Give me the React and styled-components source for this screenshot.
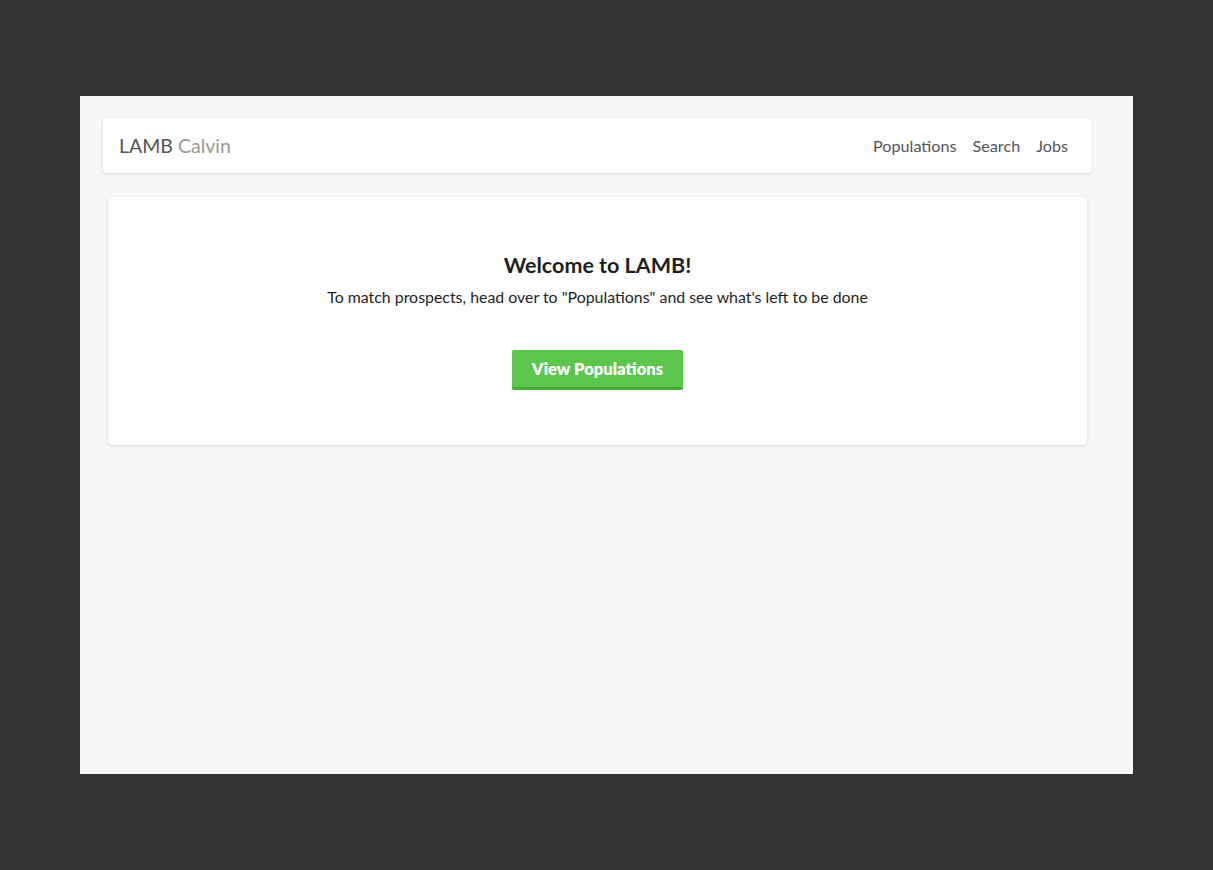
import React from "react";
import styled, { createGlobalStyle } from "styled-components";

const Global = createGlobalStyle`
  html, body { margin: 0; padding: 0; background: #323232; }
  body { font-family: "Lato", "Open Sans", sans-serif; }
`;

const Frame = styled.div`
  margin: 96px 80px;
  width: 1053px;
  height: 678px;
  box-sizing: border-box;
  background: #f7f8fa;
  padding: 22px 41px 0 23px;
`;

const Navbar = styled.nav`
  height: 55px;
  box-sizing: border-box;
  background: #fff;
  border-radius: 4px;
  box-shadow: 0 1px 3px rgba(0, 0, 0, 0.14);
  display: flex;
  align-items: center;
  justify-content: space-between;
  padding: 0 24px 1px 16px;
`;

const Brand = styled.div`
  font-size: 19.5px;
  color: #555;
`;

const Sub = styled.span`
  color: #999;
`;

const Links = styled.div`
  display: flex;
  gap: 16px;
`;

const NavLink = styled.a`
  font-size: 16.2px;
  color: #555;
  text-decoration: none;
`;

const Card = styled.section`
  margin: 24px 5px 0;
  height: 248px;
  box-sizing: border-box;
  background: #fff;
  border-radius: 4px;
  box-shadow: 0 1px 3px rgba(0, 0, 0, 0.16);
  display: flex;
  flex-direction: column;
  align-items: center;
  padding-top: 55px;
`;

const Title = styled.h1`
  margin: 0;
  font-size: 21.5px;
  font-weight: 700;
  color: #1e1e1e;
  line-height: 26px;
`;

const Lead = styled.p`
  margin: 8px 0 0;
  font-size: 15.9px;
  color: #1e1e1e;
  line-height: 22px;
`;

const Button = styled.button`
  margin-top: 42px;
  width: 171px;
  height: 40px;
  box-sizing: border-box;
  border: none;
  border-bottom: 3px solid #46ad36;
  border-radius: 2px;
  background: #5bc64b;
  color: #fff;
  font-family: inherit;
  font-weight: 800;
  font-size: 16.6px;
  padding: 0;
  cursor: pointer;
`;

export default function App() {
  return (
    <>
      <Global />
      <Frame>
        <Navbar>
          <Brand>
            LAMB <Sub>Calvin</Sub>
          </Brand>
          <Links>
            <NavLink href="#">Populations</NavLink>
            <NavLink href="#">Search</NavLink>
            <NavLink href="#">Jobs</NavLink>
          </Links>
        </Navbar>
        <Card>
          <Title>Welcome to LAMB!</Title>
          <Lead>
            To match prospects, head over to "Populations" and see what's left to be done
          </Lead>
          <Button>View Populations</Button>
        </Card>
      </Frame>
    </>
  );
}
